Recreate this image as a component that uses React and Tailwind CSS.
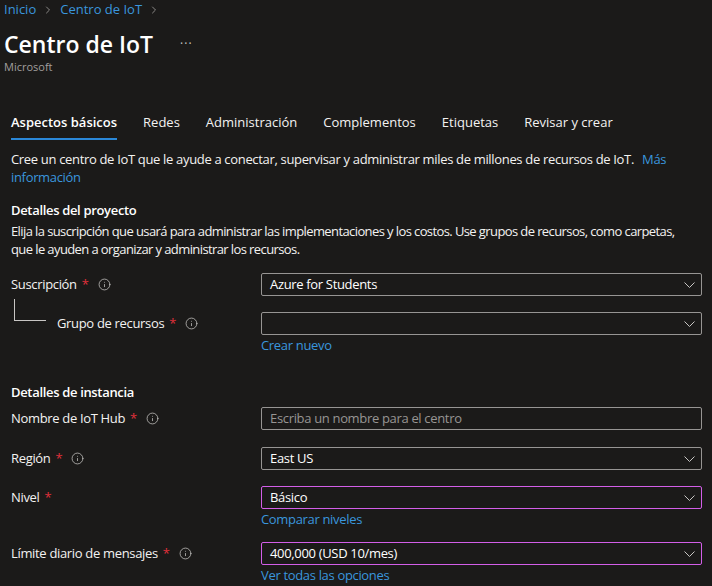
import React from "react";
import { ChevronRight, Info } from "lucide-react";

const tabs = ["Aspectos básicos", "Redes", "Administración", "Complementos", "Etiquetas", "Revisar y crear"];

function Req() {
  return <span className="text-[#e0303b] ml-[5px]">*</span>;
}

function InfoIcon() {
  return <Info size={13} strokeWidth={1.4} className="text-[#c8c6c4] ml-[9px]" />;
}

function Chevron() {
  return (
    <svg width="11" height="6" viewBox="0 0 11 6" className="text-[#c8c6c4]">
      <polyline points="0.5,0.5 5.5,5.5 10.5,0.5" fill="none" stroke="currentColor" strokeWidth="1" />
    </svg>
  );
}

function Select({ value, pink, placeholder }) {
  return (
    <div
      className={`h-[23px] flex items-center justify-between pl-[8px] pr-[6px] border ${
        pink ? "border-[#d35ee8]" : "border-[#979593]"
      } rounded-[2px]`}
    >
      {placeholder ? (
        <span className="text-[#979593]">{placeholder}</span>
      ) : (
        <span className="text-white">{value}</span>
      )}
      {!placeholder && <Chevron />}
    </div>
  );
}

function Row({ label, info, children, link }) {
  return (
    <div className="flex items-start">
      <div className="w-[250px] h-[23px] flex items-center">
        <span>{label}</span>
        <Req />
        {info && <InfoIcon />}
      </div>
      <div className="flex-1">
        {children}
        {link && <div className="text-[#3a96dd] leading-[20px]">{link}</div>}
      </div>
    </div>
  );
}

export default function App() {
  return (
    <div
      className="w-[712px] h-[586px] overflow-hidden bg-[#1b1a19] text-[#f3f2f1] text-[13px]"
      style={{ fontFamily: "'Open Sans', 'Noto Sans', sans-serif" }}
    >
      {/* breadcrumb */}
      <div className="flex items-center gap-[6px] px-[4px] pt-[1px] text-[#3a96dd] h-[18px]">
        <span>Inicio</span>
        <ChevronRight size={12} className="text-[#8a8886]" />
        <span>Centro de IoT</span>
        <ChevronRight size={12} className="text-[#8a8886]" />
      </div>

      <div className="flex items-center px-[4px] mt-[11px] h-[30px]">
        <h1 className="text-[23px] font-semibold text-white">Centro de IoT</h1>
        <span className="ml-[27px] text-[#c8c6c4] text-[12px] tracking-[1px]">···</span>
      </div>
      <div className="px-[4px] text-[11px] text-[#a19f9d] leading-[14px] mt-[1px]">Microsoft</div>

      <div className="pl-[11px] pr-[10px]">
        {/* tabs */}
        <div className="flex gap-[26px] mt-[38px]">
          {tabs.map((t, i) => (
            <div key={t} className="flex flex-col">
              <span className={`leading-[20px] ${i === 0 ? "font-semibold text-white" : "text-[#f3f2f1]"}`}>{t}</span>
              <div className={`h-[2px] mt-[6px] ${i === 0 ? "bg-[#2b88d8]" : ""}`} />
            </div>
          ))}
        </div>

        <div className="tracking-[-0.33px]">
          <p className="mt-[10px] leading-[18px]">
            Cree un centro de IoT que le ayude a conectar, supervisar y administrar miles de millones de recursos de IoT.
            <span className="text-[#3a96dd] ml-[8px]">Más</span>
            <br />
            <span className="text-[#3a96dd]">información</span>
          </p>

          <h2 className="mt-[14px] font-semibold text-white leading-[20px]">Detalles del proyecto</h2>
          <p className="mt-[2px] leading-[18px] tracking-[-0.6px] whitespace-nowrap">
            Elija la suscripción que usará para administrar las implementaciones y los costos. Use grupos de recursos, como
            carpetas,
            <br />
            que le ayuden a organizar y administrar los recursos.
          </p>

          <div className="mt-[15px] flex flex-col">
            <Row label="Suscripción" info>
              <Select value="Azure for Students" />
            </Row>
            <div className="flex items-start mt-[16px]">
              <div className="w-[250px] h-[23px] flex items-center relative">
                <div className="absolute left-[3px] top-[-13px] w-[32px] h-[22px] border-l border-b border-[#c8c6c4]" />
                <div className="pl-[46px] flex items-center">
                  <span>Grupo de recursos</span>
                  <Req />
                  <InfoIcon />
                </div>
              </div>
              <div className="flex-1">
                <Select value="" />
                <div className="text-[#3a96dd] leading-[20px]">Crear nuevo</div>
              </div>
            </div>
          </div>

          <h2 className="mt-[27px] font-semibold text-white leading-[20px]">Detalles de instancia</h2>

          <div className="mt-[5px] flex flex-col">
            <Row label="Nombre de IoT Hub" info>
              <Select placeholder="Escriba un nombre para el centro" />
            </Row>
            <div className="mt-[17px]">
              <Row label="Región" info>
                <Select value="East US" />
              </Row>
            </div>
            <div className="mt-[16px]">
              <Row label="Nivel" link="Comparar niveles">
                <Select value="Básico" pink />
              </Row>
            </div>
            <div className="mt-[13px]">
              <Row label="Límite diario de mensajes" info link="Ver todas las opciones">
                <Select value="400,000 (USD 10/mes)" pink />
              </Row>
            </div>
          </div>
        </div>
      </div>
    </div>
  );
}
